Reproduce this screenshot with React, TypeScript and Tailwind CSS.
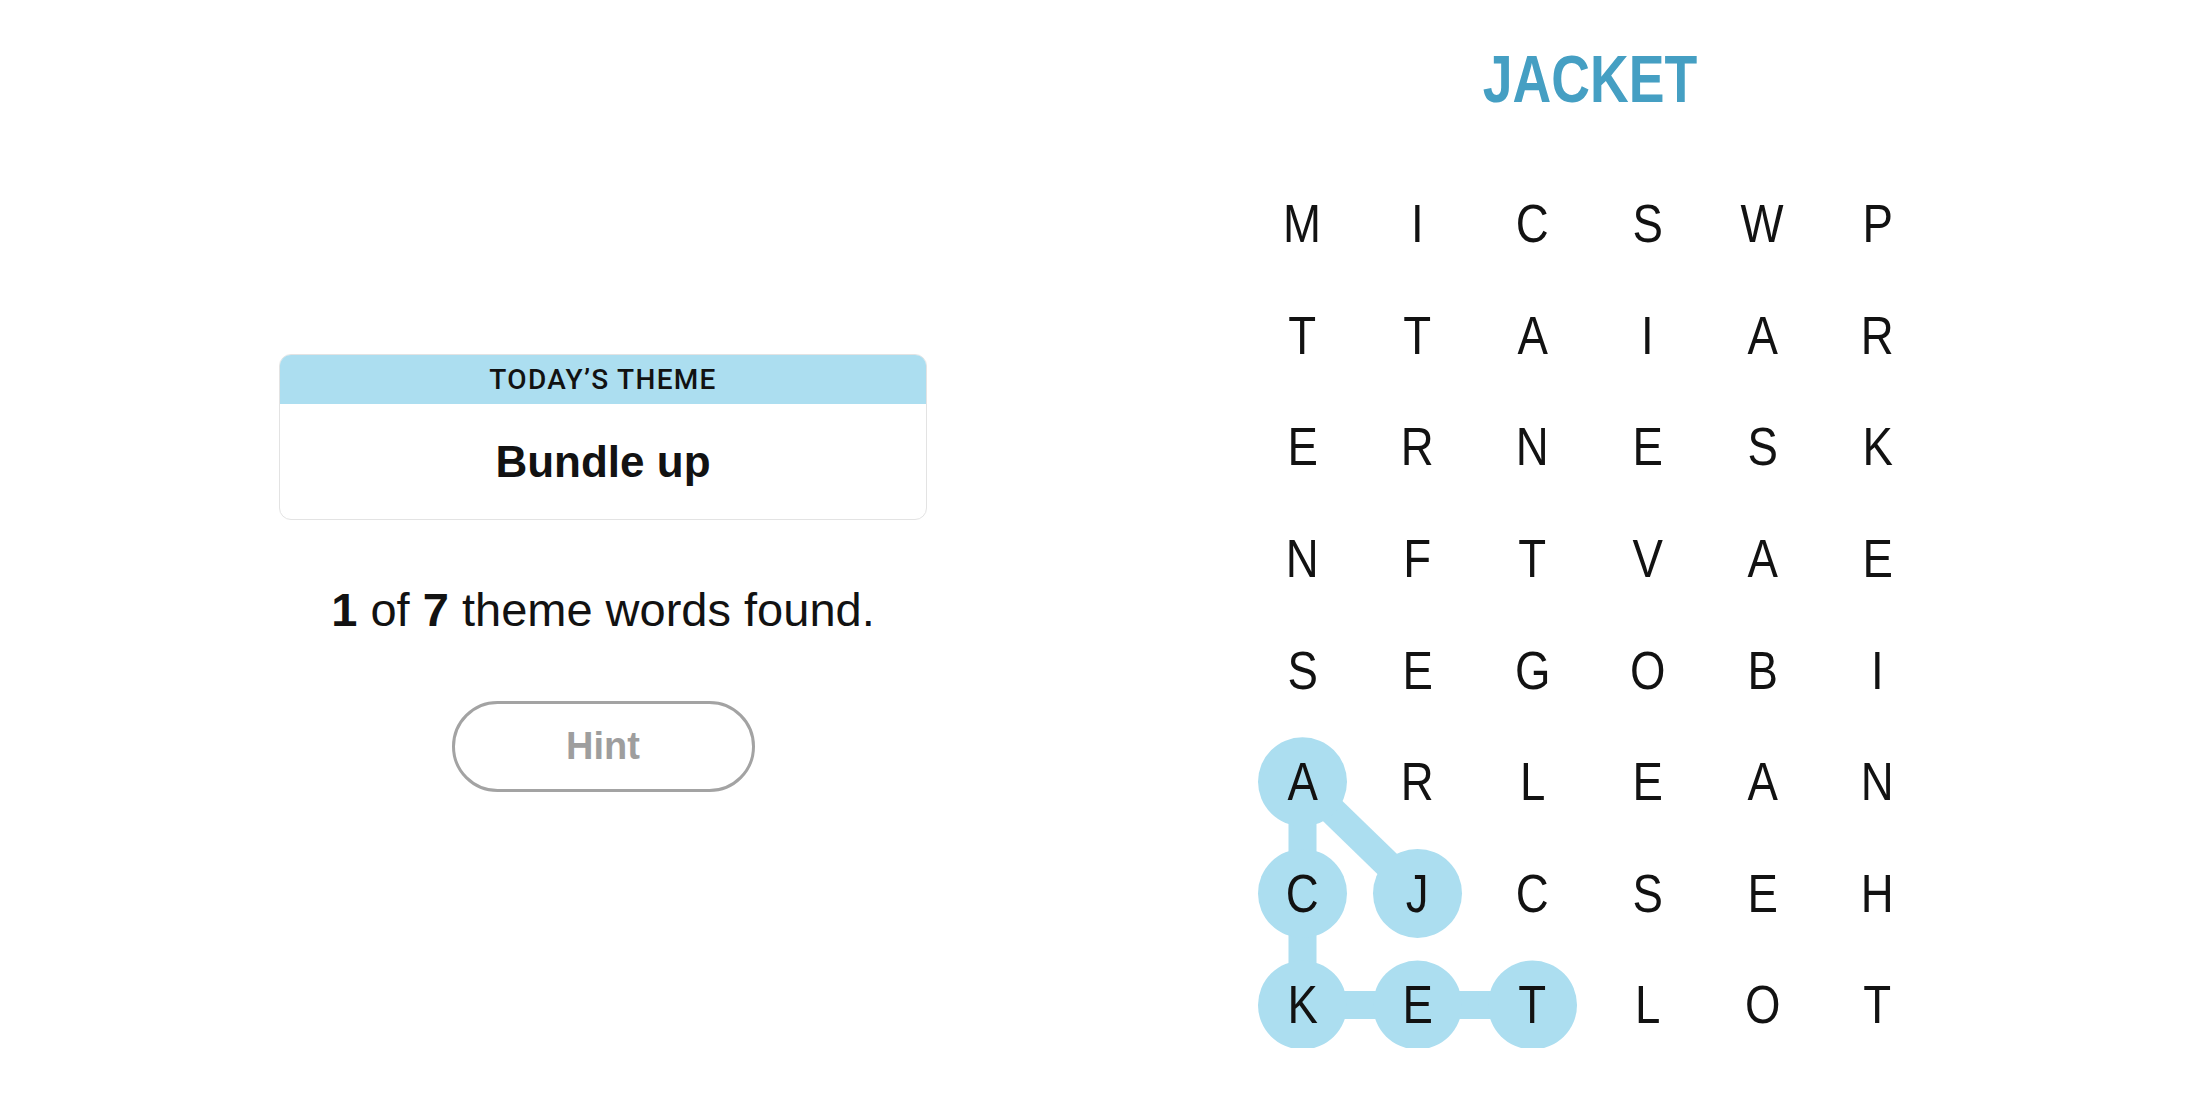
const GRID = [
  "MICSWP",
  "TTAIAR",
  "ERNESK",
  "NFTVAE",
  "SEGOBI",
  "ARLEAN",
  "CJCSEH",
  "KETLOT",
];

// found word, in the order it was traced: J A C K E T
const PATH: [number, number][] = [
  [6, 1],
  [5, 0],
  [6, 0],
  [7, 0],
  [7, 1],
  [7, 2],
];

const CELL_W = 115;
const CELL_H = 111.6;

const cx = (c: number) => CELL_W / 2 + c * CELL_W;
const cy = (r: number) => CELL_H / 2 + r * CELL_H;

function ThemeCard() {
  return (
    <div className="w-[648px] rounded-[12px] border border-[#e3e3e3] overflow-hidden">
      <div className="h-[49px] bg-[#acdef0] flex items-center justify-center">
        <span className="text-[28px] font-medium tracking-[1.3px] text-[#121212] uppercase font-['Roboto',sans-serif]">
          Today’s Theme
        </span>
      </div>
      <div className="h-[115px] flex items-center justify-center">
        <span className="text-[44px] font-bold text-[#121212] font-['Liberation_Sans',sans-serif]">
          Bundle up
        </span>
      </div>
    </div>
  );
}

function Board() {
  return (
    <div className="relative w-[690px] h-[893px]">
      <svg className="absolute inset-0" width={690} height={893}>
        {PATH.slice(1).map(([r, c], i) => {
          const [pr, pc] = PATH[i];
          return (
            <line
              key={i}
              x1={cx(pc)}
              y1={cy(pr)}
              x2={cx(c)}
              y2={cy(r)}
              stroke="#acdef0"
              strokeWidth={28}
            />
          );
        })}
        {PATH.map(([r, c]) => (
          <circle key={`${r}-${c}`} cx={cx(c)} cy={cy(r)} r={44.5} fill="#acdef0" />
        ))}
      </svg>
      <div className="relative grid grid-cols-[repeat(6,115px)] grid-rows-[repeat(8,111.6px)]">
        {GRID.map((row, r) =>
          row.split("").map((ch, c) => (
            <div key={`${r}-${c}`} className="flex items-center justify-center">
              <span className="scale-x-[0.86] text-[53px] leading-none text-[#121212] font-['Liberation_Sans',sans-serif]">
                {ch}
              </span>
            </div>
          ))
        )}
      </div>
    </div>
  );
}

export default function App() {
  return (
    <div className="w-[2200px] h-[1100px] bg-white overflow-hidden">
      <div className="h-[1048px] overflow-hidden flex items-start">
        {/* left: theme + progress */}
        <div className="ml-[279px] mt-[354px] flex flex-col items-center">
          <ThemeCard />
          <p className="mt-[62px] text-[47px] leading-[56px] text-[#121212] font-['Liberation_Sans',sans-serif]">
            <b>1</b> of <b>7</b> theme words found.
          </p>
          <button className="mt-[63px] w-[303px] h-[91px] rounded-full border-[3px] border-[#a3a3a3] bg-white text-[38px] font-bold text-[#9e9e9e] font-['Liberation_Sans',sans-serif]">
            Hint
          </button>
        </div>

        {/* right: current word + board */}
        <div className="ml-[318px] flex flex-col items-center pt-[45px]">
          <h1 className="scale-x-[0.8] text-[67px] leading-none font-bold text-[#459fc3] font-['Liberation_Sans',sans-serif]">
            JACKET
          </h1>
          <div className="mt-[56px]">
            <Board />
          </div>
        </div>
      </div>
    </div>
  );
}
